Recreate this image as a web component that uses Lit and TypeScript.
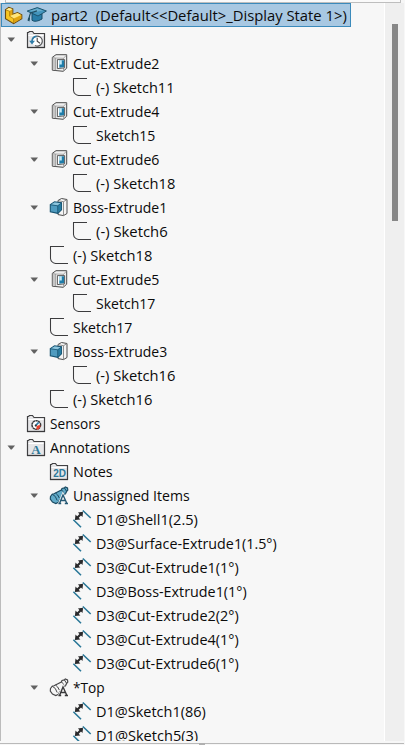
import { LitElement, html, css, svg, nothing } from "lit";
import { customElement, property } from "lit/decorators.js";
import { styleMap } from "lit/directives/style-map.js";

type Icon = "history" | "cut" | "boss" | "sketch" | "sensors" | "annotations" | "notes" | "viewOn" | "view" | "dim";
interface Node { depth: number; icon: Icon; text: string; width: number; open?: boolean; }

const n = (depth: number, icon: Icon, text: string, width: number, open = false): Node => ({ depth, icon, text, width, open });

// width: advance width of the label in pixels
const NODES: Node[] = [
  n(0, "history", "History", 47, true),
  n(1, "cut", "Cut-Extrude2", 86.5, true),
  n(2, "sketch", "(-) Sketch11", 78.5),
  n(1, "cut", "Cut-Extrude4", 86.5, true),
  n(2, "sketch", "Sketch15", 59),
  n(1, "cut", "Cut-Extrude6", 86.5, true),
  n(2, "sketch", "(-) Sketch18", 79.3),
  n(1, "boss", "Boss-Extrude1", 94.3, true),
  n(2, "sketch", "(-) Sketch6", 71.3),
  n(1, "sketch", "(-) Sketch18", 79.3),
  n(1, "cut", "Cut-Extrude5", 86.5, true),
  n(2, "sketch", "Sketch17", 59),
  n(1, "sketch", "Sketch17", 59),
  n(1, "boss", "Boss-Extrude3", 94.3, true),
  n(2, "sketch", "(-) Sketch16", 79.3),
  n(1, "sketch", "(-) Sketch16", 79.3),
  n(0, "sensors", "Sensors", 50),
  n(0, "annotations", "Annotations", 80, true),
  n(1, "notes", "Notes", 39.5),
  n(1, "viewOn", "Unassigned Items", 116.3, true),
  n(2, "dim", "D1@Shell1(2.5)", 102),
  n(2, "dim", "D3@Surface-Extrude1(1.5°)", 181),
  n(2, "dim", "D3@Cut-Extrude1(1°)", 143),
  n(2, "dim", "D3@Boss-Extrude1(1°)", 151),
  n(2, "dim", "D3@Cut-Extrude2(2°)", 143),
  n(2, "dim", "D3@Cut-Extrude4(1°)", 143),
  n(2, "dim", "D3@Cut-Extrude6(1°)", 143),
  n(1, "view", "*Top", 32, true),
  n(2, "dim", "D1@Sketch1(86)", 110),
  n(2, "dim", "D1@Sketch5(3)", 102),
];

const folder = svg`
  <path d="M1.5 18.5V3.5H2.5L3.5 2.5H6.5L8 4.5H18.5V18.5Z" fill="#e6e6e8" stroke="#414143" stroke-width="1.2"/>
  <path d="M2.5 6.5H17.5" stroke="#fff"/>
  <path d="M1 18.5H19" stroke="#39393b" stroke-width="1.3"/>`;

const view = (fill: string, line: string, letter: string) => svg`
  <path d="M1.5 11.5L3.2 9.2L5 8.8L12.3 5L13 3.5L15.4 2.9L16.3 1.9L18.5 3L18.8 5L17.6 6.4L16.7 8.3L10.8 14.5L9.5 17.3L6.8 18.6L3.5 17L1.3 14Z" fill="${fill}" stroke="${line}" stroke-width="1.2"/>
  <path d="M3.2 9.2Q6.8 10.5 8.2 15.5M6.5 8Q9 9.5 10.3 13M12.3 5Q14.5 6 15 8.5M15.4 2.9L17.6 6.4" fill="none" stroke="${line}"/>
  <path d="M10.6 18.2L14 10L17.8 18.2Z" fill="#f7f7f7" stroke="#f7f7f7" stroke-width="3"/>
  <path d="M10.6 18.2L14 10L17.8 18.2M12 15.5H16.3M9.4 18.5H12.2M15.8 18.5H19" fill="none" stroke="${letter}" stroke-width="1.4"/>`;

const ICONS = {
  history: svg`${folder}
    <circle cx="11.2" cy="12" r="5" fill="#fff"/>
    <path d="M7 9.5A5 5 0 1 1 9 16.5" fill="none" stroke="#55575a" stroke-width="1.2"/>
    <path d="M11.2 8.8V12.2L14 14.3" fill="none" stroke="#444" stroke-width="1.1"/>
    <path d="M10.5 7.3Q6.5 7.6 6 12" fill="none" stroke="#2d7ca8" stroke-width="1.7"/>
    <path d="M3.2 11.7H9L6 15.5Z" fill="#2d7ca8"/>`,
  cut: svg`
    <path d="M3.3 4.3L7 1.7H17.7V15.2L14.2 18.3L3.3 17.2Z" fill="#efefef" stroke="#4c4c4c" stroke-width="1"/>
    <path d="M3.8 4.8L6.4 5.3V17L3.8 16.7Z" fill="#c6c6c6"/>
    <path d="M3.5 4.4L6.6 5V17.4M6.6 5L14.5 5.3L17.4 2.2M14.5 5.3V17.8" fill="none" stroke="#8c8c8c" stroke-width=".7"/>
    <path d="M8.4 6.6H15.6V14.8L8.4 15.6Z" fill="#fff" stroke="#484848" stroke-width=".9"/>
    <path d="M10.3 7.2H15.1V14.1L10.3 14.7Z" fill="#1f7ca8"/>
    <path d="M9 12.6L10.6 11.4H12.8V7.2H10.3V11.8Z" fill="#c4e8f5"/>`,
  boss: svg`
    <path d="M9 3.5L12.5 1.5L18 2.5V16.5L14.5 18.6L9 17.6Z" fill="#f4f4f4" stroke="#4d4d4d" stroke-width="1"/>
    <path d="M9.5 3.8L14.5 4.7V18.2M14.5 4.7L17.6 2.8" fill="none" stroke="#777" stroke-width=".8"/>
    <path d="M1.3 7.6L5.5 4.9L12.5 5.8V12.7L8.8 16.4L1.3 14.8Z" fill="#4f9bbf" stroke="#185472" stroke-width="1.1"/>
    <path d="M2 7.6L5.7 5.4L12 6.2L8.8 8.6Z" fill="#8dc6de"/>
    <path d="M8.8 8.8L12.2 6.4V12.4L8.8 15.8Z" fill="#287ca2"/>
    <path d="M1.5 7.8L8.7 8.8V16M8.7 8.8L12.3 6" fill="none" stroke="#185472" stroke-width=".8"/>`,
  sketch: svg`<path d="M15 1.5H1.5V13.5C1.8 16 4 18 6.5 18.5H19" fill="none" stroke="#3c3c3e" stroke-width="1.05"/>`,
  sensors: svg`${folder}
    <circle cx="10.3" cy="12" r="4.3" fill="#fff" stroke="#38383b" stroke-width="1.5" stroke-dasharray="2.3 .4"/>
    <path d="M9.4 12.7L12.7 9.4" stroke="#2d7ca8" stroke-width="1.6"/>
    <path d="M10.7 13L13.4 12L14.8 13L12.3 16.6H10.3Z" fill="#ee402b"/>
    <circle cx="9.8" cy="12.6" r="1.1" fill="#333"/>`,
  annotations: svg`${folder}
    <text x="9.9" y="17" text-anchor="middle" class="serif">A</text>`,
  notes: svg`${folder}
    <text x="4.3" y="16" class="sans" textLength="12.8" lengthAdjust="spacingAndGlyphs">2D</text>`,
  viewOn: view("#62abc9", "#1d4c63", "#255873"),
  view: view("#f6f6f6", "#48484a", "#39393b"),
  dim: svg`
    <path d="M1.4 10.8L9 18.3M10.8 1.5L18.7 9" stroke="#2b7898" stroke-width="1.6"/>
    <path d="M5 9L10 4" stroke="#29292b" stroke-width="2.2"/>
    <path d="M2.9 10.9L3.5 5.5L8.4 10.4ZM11 2.7L5.9 3.4L10.5 8Z" fill="#29292b"/>`,
};

@customElement("fit-label")
export class FitLabel extends LitElement {
  static styles = css`
    :host { display: block; white-space: pre; }
    .text { display: inline-block; transform-origin: 0 50%; }
  `;
  @property() text = "";
  @property({ type: Number }) width = 0;
  render() { return html`<span class="text">${this.text}</span>`; }
  updated() {
    const el = this.renderRoot.querySelector<HTMLElement>(".text")!;
    const natural = el.offsetWidth;
    if (natural) el.style.transform = `scaleX(${this.width / natural})`;
  }
}

@customElement("app-root")
export class AppRoot extends LitElement {
  static styles = css`
    :host {
      display: flex; flex-direction: column; box-sizing: border-box;
      width: 405px; height: 745px; overflow: hidden; background: #f7f7f7;
      font: 15px/24px "Open Sans", "Noto Sans", sans-serif; color: #0b0b0b;
    }
    .top { flex: none; height: 3px; margin: 0 4px 0 5px; box-sizing: border-box;
      border: 1px solid #bebebe; border-top: 0; background: #fafafa; }
    .panel { flex: none; height: 738px; display: flex; overflow: hidden; }
    .tree { flex: 1; border-left: 1px solid #bcbcbc; overflow: hidden; }
    .root { display: flex; align-items: center; box-sizing: border-box; width: 350px; height: 24px;
      border: 1px solid #3b8abb; background: #a8c8e2; line-height: 22px; }
    .part { width: 20px; height: 20px; margin-left: 2px; }
    .cap { width: 22px; height: 20px; margin: 0 3px 0 2px; }
    .row { display: flex; align-items: center; height: 24px; }
    .twist { width: 8px; height: 5px; margin: 0 11px 0 6px; }
    .icon { width: 20px; height: 20px; margin-right: 4px; }
    svg { flex: none; display: block; overflow: visible; }
    .serif { font: bold 13px "Liberation Serif", serif; fill: #2d7899; }
    .sans { font: bold 10px "Liberation Sans", sans-serif; fill: #2d7899; }
    .bar { width: 19px; margin-right: 1px; border-left: 1px solid #fff; background: #efefef; }
    .thumb { width: 6px; height: 197px; margin: 21px 0 0 7px; background: #878787; }
    .bottom { flex: none; height: 4px; margin-right: 1px; display: flex; justify-content: center;
      box-sizing: border-box; padding-top: 1px; }
    .line { flex: 1; height: 2px; box-sizing: border-box; border-bottom: 1px solid #b9b9b9; }
    .grip { width: 6px; height: 2px; background: #b0b0b0; margin-top: 1px; }
  `;

  private row(node: Node) {
    return html`<div class="row" style=${styleMap({ paddingLeft: `${node.depth * 23}px` })}>
      <svg class="twist" viewBox="0 0 8 5">${node.open ? svg`<path d="M.5 .5H8L4.8 4.5H3.7Z" fill="#626262"/>` : nothing}</svg>
      <svg class="icon" viewBox="0 0 20 20">${ICONS[node.icon]}</svg>
      <fit-label .text=${node.text} .width=${node.width}></fit-label>
    </div>`;
  }

  render() {
    return html`
      <div class="top"></div>
      <div class="panel">
        <div class="tree">
          <div class="root">
            <svg class="part" viewBox="0 0 20 20">
              <path d="M1.5 4.6L4.8 2.3L8.8 3.8V9.3L13.5 7.5L17.8 9.8V13.8L9.6 18.6L1.5 13.8Z" fill="#f7c522" stroke="#6c4b10" stroke-width="1.1"/>
              <path d="M2 4.8L4.9 2.9L8.3 4.1L5.6 5.9Z" fill="#ffeb9a"/>
              <path d="M5.8 11.2L8.8 9.8L13.5 8.1L17 9.9L9.6 13.6Z" fill="#ffe57c"/>
              <path d="M5.6 6.2L8.3 4.5V9.5L5.6 11ZM9.8 13.8L17.3 10.2V13.5L9.8 17.9Z" fill="#e0a413"/>
              <path d="M2 5L5.6 6.2V11.2L9.6 13.7V18" fill="none" stroke="#a4740c" stroke-width=".7"/>
            </svg>
            <svg class="cap" viewBox="0 0 22 20">
              <path d="M6 8.5V15.3Q9.5 17.8 16 14V9Z" fill="#287da8" stroke="#174d69"/>
              <path d="M1.2 6.1L11.3 2.6L20.4 6L12 11Z" fill="#4395bd" stroke="#1c536d"/>
              <path d="M3 6L11.2 3.4L17 5.5L10 6.9Z" fill="#6aaecd"/>
              <path d="M11 5.9L4.5 7.9Q3.5 10 2.9 15" fill="none" stroke="#204e63" stroke-width="1.2"/>
              <path d="M2.3 12.5L4 13L3.5 16.5L1.5 15.5Z" fill="#204e63"/>
            </svg>
            <fit-label .text=${"part2  (Default<<Default>_Display State 1>)"} .width=${296}></fit-label>
          </div>
          ${NODES.map((node) => this.row(node))}
        </div>
        <div class="bar"><div class="thumb"></div></div>
      </div>
      <div class="bottom"><div class="line"></div><div class="grip"></div><div class="line"></div></div>
    `;
  }
}
